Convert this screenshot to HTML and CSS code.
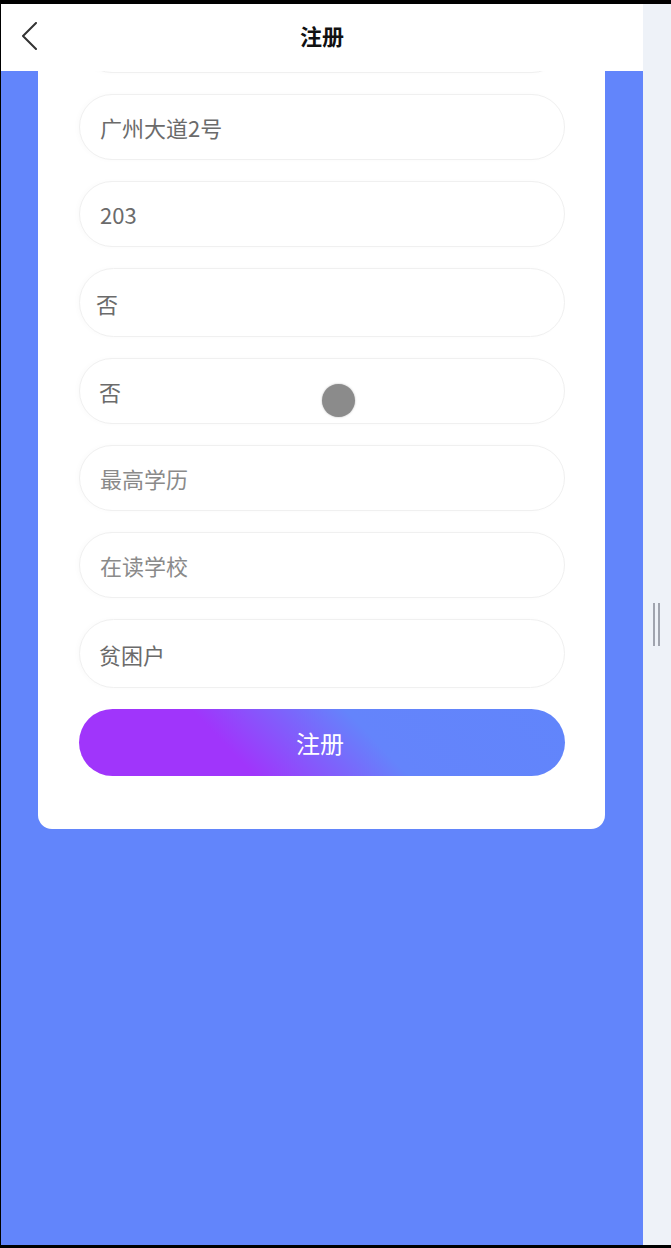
FILE: index.html
```html
<!DOCTYPE html>
<html lang="zh-CN">
<head>
<meta charset="utf-8">
<title>注册</title>
<link rel="stylesheet" href="styles.css">
</head>
<body>
<div class="screen">
  <div class="app">
    <header class="header">
      <div class="back">
        <svg width="20" height="28" viewBox="0 0 20 28" aria-hidden="true">
          <polyline points="15,1 2,14 15,27" fill="none" stroke="#333" stroke-width="2" stroke-linecap="round" stroke-linejoin="round"/>
        </svg>
      </div>
      <h1 class="title">注册</h1>
      <div></div>
    </header>
    <main class="card">
      <input class="field" type="text" value="广州">
      <input class="field" type="text" value="广州大道2号">
      <input class="field" type="text" value="203">
      <div class="field picker tall first">否</div>
      <div class="field picker">否</div>
      <input class="field" type="text" placeholder="最高学历">
      <input class="field" type="text" placeholder="在读学校">
      <div class="field picker tall">贫困户</div>
      <button class="submit" type="button">注册</button>
    </main>
    <div class="touch"></div>
  </div>
  <aside class="side">
    <span class="grip"></span>
    <span class="grip"></span>
  </aside>
</div>
</body>
</html>
```

FILE: styles.css
```css
html, body {
  margin: 0;
  padding: 0;
  background: #000;
  height: 1248px;
  overflow: hidden;
  font-family: "Noto Sans CJK SC", "Noto Sans", sans-serif;
}

.screen {
  margin-top: 4px;
  height: 1241px;
  display: flex;
  padding-left: 1px;
}

.app {
  width: 642px;
  background: #6285fb;
  position: relative;
  overflow: hidden;
}

.header {
  position: absolute;
  top: 0;
  left: 0;
  right: 0;
  height: 67px;
  background: #fff;
  z-index: 2;
  display: grid;
  grid-template-columns: 1fr auto 1fr;
  align-items: center;
}

.back {
  padding-left: 20px;
  display: flex;
  align-items: center;
  margin-top: -3px;
}

.title {
  margin: -6px 0 0 0;
  font-size: 22px;
  font-weight: 700;
  color: #111;
  line-height: 1;
}

.card {
  margin-left: 37px;
  width: 567px;
  box-sizing: border-box;
  background: #fff;
  border-radius: 0 0 14px 14px;
  padding: 3px 40px 53px 41px;
  display: flex;
  flex-direction: column;
  gap: 21px;
}

.field {
  display: flex;
  align-items: center;
  box-sizing: border-box;
  width: 486px;
  height: 66px;
  margin: 0;
  padding: 0 0 0 20px;
  border: 1px solid #f0f0f0;
  border-radius: 33px;
  background: #fff;
  font-family: "Noto Sans CJK SC", "Noto Sans", sans-serif;
  font-size: 22px;
  color: #6b6b6b;
  outline: none;
  box-shadow: -2px 0 5px rgba(0, 0, 0, 0.02);
}

.field::placeholder {
  color: #8a8a8a;
}

.picker {
  padding-left: 19px;
}

.picker.first {
  padding-left: 16px;
}

.tall {
  height: 69px;
  border-radius: 35px;
}

.submit {
  width: 486px;
  height: 67px;
  border: none;
  border-radius: 34px;
  margin: 0;
  padding: 0 4px 0 0;
  background: linear-gradient(46deg, #a035fb 0%, #a035fb 32%, #6484fb 60%, #6185fb 100%);
  color: #fff;
  font-family: "Noto Sans CJK SC", "Noto Sans", sans-serif;
  font-size: 24px;
  cursor: pointer;
}

.touch {
  position: absolute;
  left: 321px;
  top: 380px;
  width: 33px;
  height: 33px;
  border-radius: 50%;
  background: #8b8b8b;
  box-shadow: 0 0 2px rgba(120, 120, 120, 0.6);
  z-index: 3;
}

.side {
  flex: 1;
  background: #eef2f8;
  display: flex;
  align-items: center;
  padding-left: 10px;
  gap: 3px;
}

.grip {
  width: 2px;
  height: 43px;
  background: #a0a4ae;
}
```
